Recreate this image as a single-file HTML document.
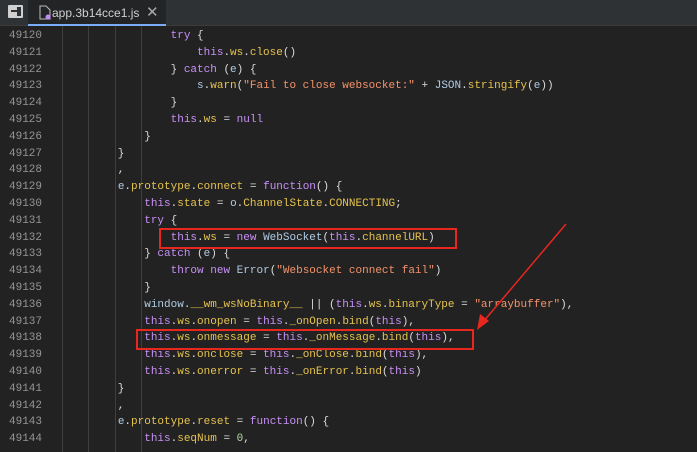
<html><head><style>
body{margin:0;width:697px;height:452px;background:#222222;overflow:hidden;position:relative;font-family:"Liberation Mono",monospace}
#tabs{position:absolute;left:0;top:0;width:697px;height:25px;background:#2f3234;border-bottom:1px solid #3c3c3c}
#tab{position:absolute;left:28px;top:0;width:138px;height:25px;background:#232425}
#tab .u{position:absolute;left:0;bottom:-1px;width:138px;height:2px;background:#7cacf8}
#tab .t{position:absolute;left:24px;top:6px;font:12px "Liberation Sans",sans-serif;color:#d0d0d0}
#tab .x{position:absolute;left:118px;top:3px;font:15px "Liberation Sans",sans-serif;color:#aaa}
.ln{position:absolute;left:9px;width:45px;color:#959595;font-size:11px}
.c{position:absolute;left:65px;white-space:pre;font-size:11px;color:#dcdcdc}
.g{position:absolute;width:1px;background:#3e3e3e;top:26px;height:426px}
.k{color:#c890f7}.p{color:#e6c34e}.s{color:#f3936b}.v{color:#b0cbe3}.n{color:#b8dba0}
.box{position:absolute;border:2px solid #e8271f;box-sizing:border-box}
</style></head><body>
<div class="g" style="left:62px"></div><div class="g" style="left:88px"></div><div class="g" style="left:115px"></div><div class="g" style="left:141px"></div>
<div id="code"></div>
<script>
const L=[
[16,'<span class="k">try</span> {'],
[20,'<span class="k">this</span>.<span class="p">ws</span>.<span class="p">close</span>()'],
[16,'} <span class="k">catch</span> (<span class="v">e</span>) {'],
[20,'<span class="v">s</span>.<span class="p">warn</span>(<span class="s">"Fail to close websocket:"</span> + <span class="v">JSON</span>.<span class="p">stringify</span>(<span class="v">e</span>))'],
[16,'}'],
[16,'<span class="k">this</span>.<span class="p">ws</span> = <span class="k">null</span>'],
[12,'}'],[8,'}'],[8,','],
[8,'<span class="v">e</span>.<span class="p">prototype</span>.<span class="p">connect</span> = <span class="k">function</span>() {'],
[12,'<span class="k">this</span>.<span class="p">state</span> = <span class="v">o</span>.<span class="p">ChannelState</span>.<span class="p">CONNECTING</span>;'],
[12,'<span class="k">try</span> {'],
[16,'<span class="k">this</span>.<span class="p">ws</span> = <span class="k">new</span> <span class="v">WebSocket</span>(<span class="k">this</span>.<span class="p">channelURL</span>)'],
[12,'} <span class="k">catch</span> (<span class="v">e</span>) {'],
[16,'<span class="k">throw</span> <span class="k">new</span> <span class="v">Error</span>(<span class="s">"Websocket connect fail"</span>)'],
[12,'}'],
[12,'<span class="v">window</span>.<span class="p">__wm_wsNoBinary__</span> || (<span class="k">this</span>.<span class="p">ws</span>.<span class="p">binaryType</span> = <span class="s">"arraybuffer"</span>),'],
[12,'<span class="k">this</span>.<span class="p">ws</span>.<span class="p">onopen</span> = <span class="k">this</span>.<span class="p">_onOpen</span>.<span class="p">bind</span>(<span class="k">this</span>),'],
[12,'<span class="k">this</span>.<span class="p">ws</span>.<span class="p">onmessage</span> = <span class="k">this</span>.<span class="p">_onMessage</span>.<span class="p">bind</span>(<span class="k">this</span>),'],
[12,'<span class="k">this</span>.<span class="p">ws</span>.<span class="p">onclose</span> = <span class="k">this</span>.<span class="p">_onClose</span>.<span class="p">bind</span>(<span class="k">this</span>),'],
[12,'<span class="k">this</span>.<span class="p">ws</span>.<span class="p">onerror</span> = <span class="k">this</span>.<span class="p">_onError</span>.<span class="p">bind</span>(<span class="k">this</span>)'],
[8,'}'],[8,','],
[8,'<span class="v">e</span>.<span class="p">prototype</span>.<span class="p">reset</span> = <span class="k">function</span>() {'],
[12,'<span class="k">this</span>.<span class="p">seqNum</span> = <span class="n">0</span>,']
];
let h='<div class="c" style="top:13px">                }</div>';
L.forEach((l,i)=>{const t=30+i*16.8;
h+=`<div class="ln" style="top:${t}px">${49120+i}</div><div class="c" style="top:${t}px">${' '.repeat(l[0])}${l[1]}</div>`;});
document.getElementById('code').innerHTML=h;
</script>
<div class="box" style="left:159px;top:228px;width:298px;height:21px"></div>
<div class="box" style="left:136px;top:329px;width:338px;height:21px"></div>
<svg style="position:absolute;left:0;top:0" width="697" height="452"><line x1="566" y1="224" x2="483" y2="322" stroke="#e8271f" stroke-width="1.5"/><path d="M477 330 L480 314 L489 321 Z" fill="#e8271f"/></svg>
<div id="tabs"><div style="position:absolute;left:8px;top:5px;width:15px;height:13px;background:#d0d0d0;border-radius:1px"><div style="position:absolute;left:9px;top:2px;width:4px;height:9px;background:#2f3234"></div><div style="position:absolute;left:3px;top:5px;width:6px;height:2px;background:#2f3234"></div></div>
<div id="tab"><svg style="position:absolute;left:11px;top:5px" width="14" height="15"><path d="M1 1h6l4 4v9H1z" fill="none" stroke="#bbb"/><circle cx="9" cy="12" r="2.5" fill="#c58af9"/></svg><div class="t">app.3b14cce1.js</div><div class="x">✕</div><div class="u"></div></div></div>
</body></html>
